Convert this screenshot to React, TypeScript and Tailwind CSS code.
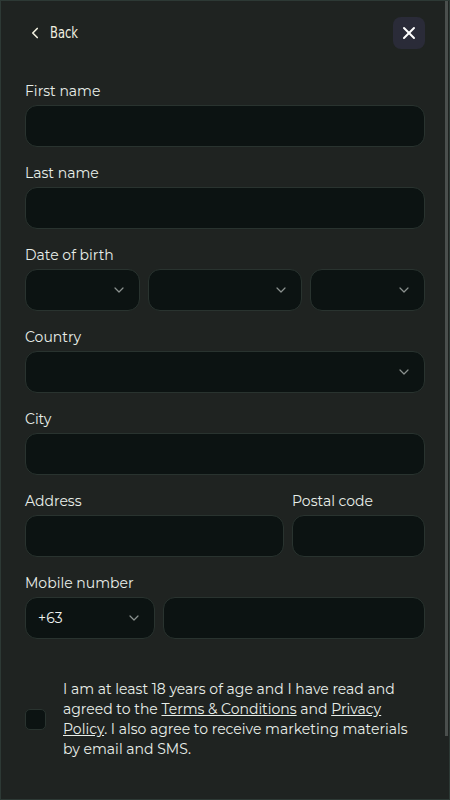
import { ChevronDown, ChevronLeft, X } from 'lucide-react'

const font = { fontFamily: "Montserrat, 'Open Sans', 'Noto Sans', sans-serif" }

function Label({ children }: { children: React.ReactNode }) {
  return <div className="h-5 text-[14px] leading-5 text-[#e8eee9]">{children}</div>
}

function TextBox({ className = '' }: { className?: string }) {
  return (
    <div
      className={`h-[42px] rounded-xl border border-[#29332f] bg-[#0c1312] ${className}`}
    />
  )
}

function SelectBox({ value, className = '' }: { value?: string; className?: string }) {
  return (
    <div
      className={`flex h-[42px] items-center justify-between rounded-xl border border-[#29332f] bg-[#0c1312] pl-3 pr-3 ${className}`}
    >
      <span className="text-[14px] text-[#eef2ef]">{value}</span>
      <ChevronDown className="h-4 w-4 text-[#8b918f]" strokeWidth={1.8} />
    </div>
  )
}

function Field({ label }: { label: string }) {
  return (
    <div className="flex flex-col gap-1">
      <Label>{label}</Label>
      <TextBox />
    </div>
  )
}

export default function App() {
  return (
    <div
      className="flex h-[800px] w-[450px] border border-[#2d3935] bg-[#1f2321]"
      style={font}
    >
      <div className="flex flex-1 flex-col pl-6 pr-5 pt-4">
        <div className="flex h-8 items-center justify-between">
          <div className="flex items-center gap-[6px] pl-px text-[#f1f0e0]">
            <ChevronLeft className="h-[18px] w-[18px]" strokeWidth={2.2} />
            <span
              className="inline-block origin-left scale-x-[0.8] text-[16px] font-medium"
              style={{ fontFamily: "'Liberation Sans Narrow', 'DejaVu Sans Condensed', 'Liberation Sans', sans-serif" }}
            >
              Back
            </span>
          </div>
          <button className="flex h-8 w-8 items-center justify-center rounded-lg bg-[#2a2b38] text-white">
            <X className="h-5 w-5" strokeWidth={2.4} />
          </button>
        </div>

        <div className="mt-8 flex flex-col gap-4">
          <Field label="First name" />
          <Field label="Last name" />

          <div className="flex flex-col gap-1">
            <Label>Date of birth</Label>
            <div className="grid grid-cols-[3fr_4fr_3fr] gap-2">
              <SelectBox />
              <SelectBox />
              <SelectBox />
            </div>
          </div>

          <div className="flex flex-col gap-1">
            <Label>Country</Label>
            <SelectBox />
          </div>

          <Field label="City" />

          <div className="flex gap-2">
            <div className="flex flex-1 flex-col gap-1">
              <Label>Address</Label>
              <TextBox />
            </div>
            <div className="flex w-[133px] flex-col gap-1">
              <Label>Postal code</Label>
              <TextBox />
            </div>
          </div>

          <div className="flex flex-col gap-1">
            <Label>Mobile number</Label>
            <div className="flex gap-2">
              <SelectBox value="+63" className="w-[130px]" />
              <TextBox className="flex-1" />
            </div>
          </div>
        </div>

        <div className="mt-10 flex items-center gap-[17px]">
          <div className="h-[21px] w-[21px] shrink-0 rounded-[5px] border border-[#29332f] bg-[#0c1312]" />
          <p className="text-[14px] leading-5 text-[#e8eee9]">
            I am at least 18 years of age and I have read and agreed to the{' '}
            <a className="underline">Terms &amp; Conditions</a> and{' '}
            <a className="underline">Privacy Policy</a>. I also agree to receive marketing
            materials by email and SMS.
          </p>
        </div>
      </div>

      <div className="mr-px w-[3px]">
        <div className="h-[735px] bg-[#4a4f4d]" />
      </div>
    </div>
  )
}
